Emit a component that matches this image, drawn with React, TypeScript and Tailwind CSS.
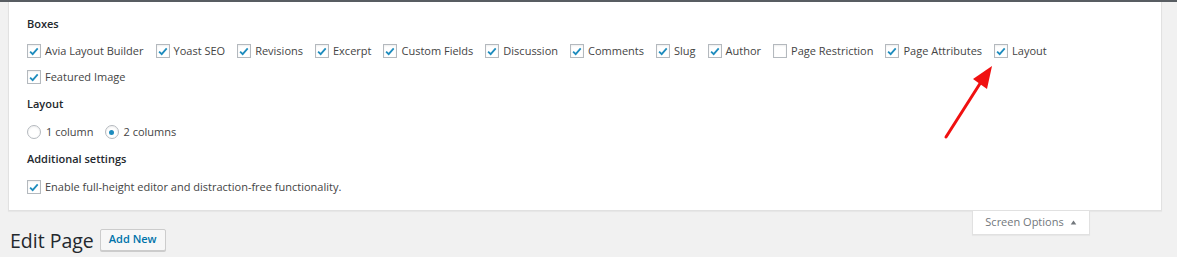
import type { ReactNode } from 'react';

const boxes: { label: string; checked: boolean }[] = [
  { label: 'Avia Layout Builder', checked: true },
  { label: 'Yoast SEO', checked: true },
  { label: 'Revisions', checked: true },
  { label: 'Excerpt', checked: true },
  { label: 'Custom Fields', checked: true },
  { label: 'Discussion', checked: true },
  { label: 'Comments', checked: true },
  { label: 'Slug', checked: true },
  { label: 'Author', checked: true },
  { label: 'Page Restriction', checked: false },
  { label: 'Page Attributes', checked: true },
  { label: 'Layout', checked: true },
  { label: 'Featured Image', checked: true },
];

function Checkbox({ checked }: { checked: boolean }) {
  return (
    <span className="mr-[4px] flex h-[14px] w-[14px] shrink-0 items-center justify-center border border-[#b4b9be] bg-white shadow-[inset_0_1px_2px_rgba(0,0,0,0.07)]">
      {checked && (
        <svg viewBox="0 0 20 20" className="h-[13px] w-[13px]">
          <path d="M3.5 10.2 L7.8 14.4 L16.2 4.8" fill="none" stroke="#1e8cbe" strokeWidth="3" />
        </svg>
      )}
    </span>
  );
}

function Radio({ checked }: { checked: boolean }) {
  return (
    <span className="mr-[5px] flex h-[14px] w-[14px] shrink-0 items-center justify-center rounded-full border border-[#b4b9be] bg-white shadow-[inset_0_1px_2px_rgba(0,0,0,0.07)]">
      {checked && <span className="h-[5px] w-[5px] rounded-full bg-[#1e8cbe]" />}
    </span>
  );
}

function Heading({ children }: { children: ReactNode }) {
  return <h5 className="h-[28px] leading-[28px] font-semibold text-[#23282d]">{children}</h5>;
}

export default function App() {
  return (
    <div
      className="relative h-[257px] w-[1177px] overflow-hidden border-t-2 border-[#585d62] bg-[#f1f1f1] text-[11px] text-[#444]"
      style={{ fontFamily: '"Open Sans", "Noto Sans", sans-serif' }}
    >
      {/* Screen options panel */}
      <div className="ml-[8px] mr-[15px] h-[209px] border-x border-b border-[#e1e1e1] bg-white px-[18px] pt-[8px] shadow-[0_1px_1px_rgba(0,0,0,0.04)]">
        <Heading>Boxes</Heading>
        <div className="flex flex-wrap">
          {boxes.map((b) => (
            <label key={b.label} className="mr-[12px] flex h-[26px] items-center text-[#444]">
              <Checkbox checked={b.checked} />
              {b.label}
            </label>
          ))}
        </div>
        <Heading>Layout</Heading>
        <div className="mt-[1px] flex h-[26px] items-center">
          <label className="mr-[11px] flex items-center">
            <Radio checked={false} />1 column
          </label>
          <label className="flex items-center">
            <Radio checked />2 columns
          </label>
        </div>
        <Heading>Additional settings</Heading>
        <label className="flex h-[28px] items-center">
          <Checkbox checked />
          Enable full-height editor and distraction-free functionality.
        </label>
      </div>

      {/* Title row + tab */}
      <div className="flex items-start justify-between">
        <div className="ml-[10px] mt-[17px] flex items-center">
          <h1 className="text-[19.5px] leading-[26px] text-[#23282d]">Edit Page</h1>
          <button className="mb-[3px] ml-[6px] h-[22px] rounded-[2px] border border-[#ccc] bg-[#f7f7f7] px-[8px] text-[11px] font-semibold text-[#0073aa] shadow-[0_1px_0_#ccc]">
            Add New
          </button>
        </div>
        <div className="mr-[87px] flex h-[24px] w-[118px] items-center justify-center border-x border-b border-[#e1e1e1] bg-white text-[#72777c] shadow-[0_1px_1px_rgba(0,0,0,0.04)]">
          Screen Options
          <svg viewBox="0 0 10 10" className="ml-[6px] h-[7px] w-[7px]">
            <path d="M1 8 L5 2 L9 8 Z" fill="#72777c" />
          </svg>
        </div>
      </div>

      {/* Red annotation arrow */}
      <svg className="pointer-events-none absolute left-[930px] top-[55px]" width="80" height="90" viewBox="0 0 80 90">
        <line x1="16" y1="80" x2="51" y2="25" stroke="#f01010" strokeWidth="3" strokeLinecap="round" />
        <path d="M62 9 L43 22 L57 32 Z" fill="#f01010" />
      </svg>
    </div>
  );
}
